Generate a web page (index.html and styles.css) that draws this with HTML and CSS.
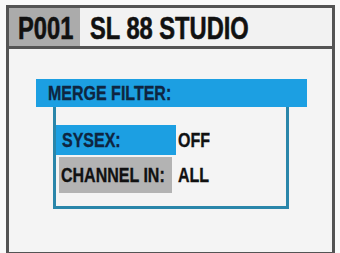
FILE: index.html
```html
<!DOCTYPE html>
<html>
<head>
<meta charset="utf-8">
<link rel="stylesheet" href="styles.css">
</head>
<body>
<div class="screen">
  <div class="header">
    <div class="prog"><span class="big">P001</span></div>
    <div class="title"><span class="big">SL 88 STUDIO</span></div>
  </div>
  <div class="content">
    <div class="bar"><span class="sm">MERGE FILTER:</span></div>
    <div class="box">
      <div class="row">
        <span class="label sel"><span class="sm">SYSEX:</span></span>
        <span class="value"><span class="sm">OFF</span></span>
      </div>
      <div class="row tall">
        <span class="label dim"><span class="sm">CHANNEL IN:</span></span>
        <span class="value"><span class="sm">ALL</span></span>
      </div>
    </div>
  </div>
</div>
</body>
</html>
```
FILE: styles.css
```css
html, body {
  margin: 0;
  padding: 0;
  background: #fafafa;
}
body {
  width: 340px;
  height: 253px;
  overflow: hidden;
  font-family: "Liberation Sans", Arial, sans-serif;
  font-weight: bold;
  color: #111;
}
.big, .sm {
  display: inline-block;
  white-space: nowrap;
  transform-origin: left center;
}
.big {
  transform: scaleX(0.74);
  -webkit-text-stroke: 0.6px currentColor;
}
.sm {
  transform: scaleX(0.8);
  -webkit-text-stroke: 0.35px currentColor;
}
.screen {
  margin: 5px 5px 0 6px;
  height: 244px;
  border: 3px solid #545454;
  background: #f4f4f4;
  display: flex;
  flex-direction: column;
}
.header {
  height: 38px;
  border-bottom: 3px solid #545454;
  display: flex;
  align-items: stretch;
  background: #f2f2f2;
}
.prog {
  width: 62px;
  padding-left: 9px;
  background: #ababab;
  font-size: 32px;
  line-height: 41px;
}
.title {
  padding-left: 10px;
  font-size: 32px;
  line-height: 41px;
}
.content {
  padding: 30px 25px 0 27px;
}
.bar {
  height: 28px;
  background: #1c9fe2;
  color: #0e2540;
  font-size: 20px;
  line-height: 29px;
  padding-left: 12px;
}
.box {
  margin: 0 18px 0 17px;
  height: 102px;
  border: 3px solid #2a86aa;
  border-top: none;
  box-sizing: border-box;
  padding-top: 18px;
}
.row {
  display: flex;
  align-items: stretch;
  height: 30px;
  margin-bottom: 2px;
  font-size: 20px;
  line-height: 31px;
}
.row.tall {
  height: 36px;
  line-height: 36px;
}
.label {
  width: 114px;
  padding-left: 6px;
  flex: none;
}
.sel {
  background: #1c9fe2;
  color: #0e2540;
}
.dim {
  background: #b3b3b3;
  margin-left: 3px;
  width: 111px;
  padding-left: 2px;
}
.value {
  padding-left: 2px;
}
.row.tall .value {
  padding-left: 6px;
}
```
